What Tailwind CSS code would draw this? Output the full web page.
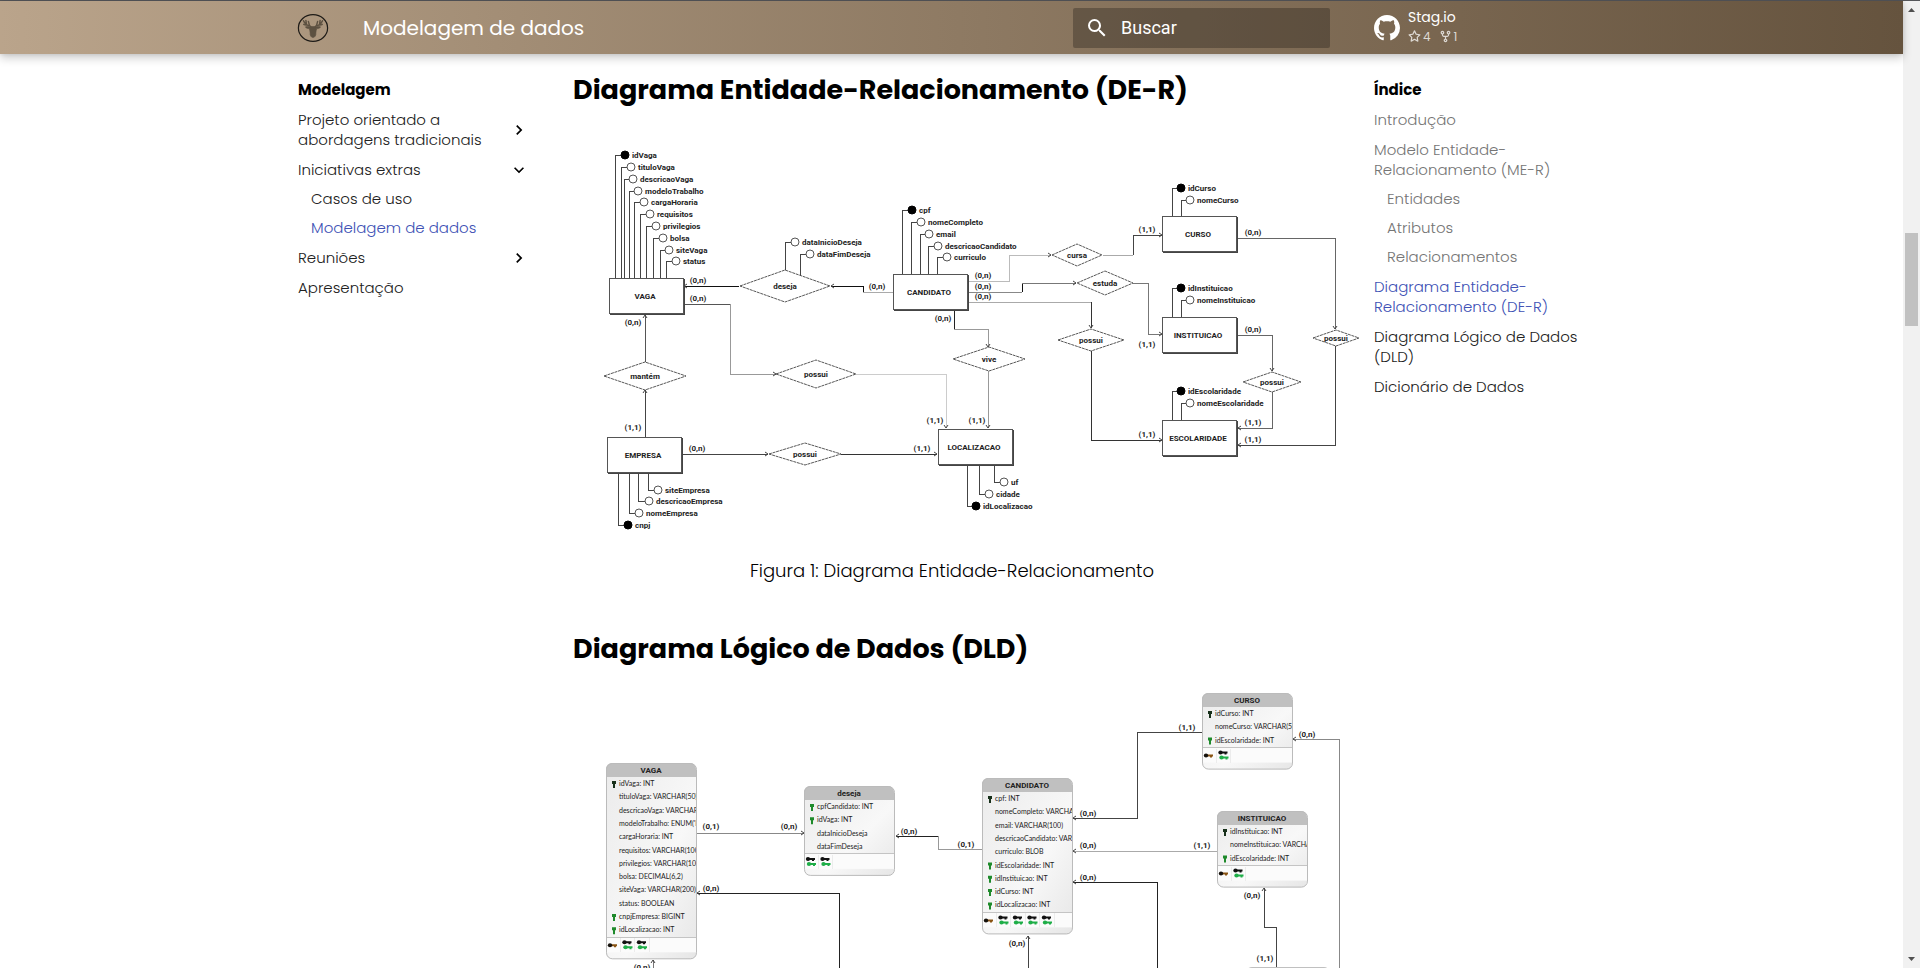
<!DOCTYPE html>
<html lang="pt-BR">
<head>
<meta charset="utf-8">
<title>Modelagem de dados</title>
<script src="https://cdn.jsdelivr.net/npm/@tailwindcss/browser@4"></script>
</head>
<body class="h-screen overflow-hidden bg-white font-['Poppins','Inter',sans-serif] text-black">
<div class="flex h-full flex-col border-t border-[#55565a]">
<div class="flex min-h-0 flex-1">

<div class="flex min-w-0 flex-1 flex-col">
  <header class="z-10 shrink-0 bg-linear-to-r from-[#baa48b] to-[#65533e] text-white shadow-[0_0_4px_rgba(0,0,0,0.1),0_4px_9px_rgba(0,0,0,0.2)]">
    <div class="mx-auto flex h-[53px] max-w-[1343px] items-center">
      <a href="#" aria-label="Início" class="ml-[17px] block">
        <svg class="size-8" viewBox="0 0 32 32" fill="none">
          <ellipse cx="16" cy="16" rx="14.600" ry="13.400" stroke="#1e1b17" stroke-width="1.2"/>
          <g fill="#5d5141" stroke="#5d5141" stroke-linejoin="round">
            <path stroke-width="0.6" d="M16 14.500c-1.500 0-2.500.3-3.200.2-1.800 0-3.300-.3-4.500.2.8 1.200 2.300 1.700 3.900 1.700.5 1.500.9 2.800.9 4.200-.2 2.700.9 4.700 2.900 4.700s3.100-2 2.900-4.700c0-1.400.4-2.700.9-4.200 1.600 0 3.100-.5 3.900-1.700-1.200-.5-2.700-.2-4.500-.2-.7.100-1.700-.2-3.200-.2z"/>
            <path fill="none" stroke-width="1.5" stroke-linecap="round" d="M14 15c-1.500-1.200-2.200-2.300-2.600-5.500M13 14c-2.500-.5-5-1.700-6.500-5.200M9.500 12.500 8.900 8.500M10 13c-1.500.2-2.400 0-3.200-.6M18 15c1.500-1.200 2.200-2.300 2.600-5.500M19 14c2.500-.5 5-1.700 6.500-5.200M22.500 12.500l.6-4M22 13c1.500.2 2.400 0 3.200-.6"/>
          </g>
        </svg>
      </a>
      <span class="ml-[34px] text-[20px]">Modelagem de dados</span>
      <form class="ml-auto flex h-10 w-[257px] items-center gap-3 rounded-xs bg-black/26 px-3">
        <svg class="size-6 shrink-0 fill-white" viewBox="0 0 24 24"><path d="M9.500 3A6.500 6.500 0 0 1 16 9.500c0 1.610-.590 3.090-1.560 4.230l.270.270h.790l5 5-1.500 1.500-5-5v-.790l-.270-.270A6.516 6.516 0 0 1 9.500 16 6.500 6.500 0 0 1 3 9.500 6.500 6.500 0 0 1 9.500 3m0 2C7 5 5 7 5 9.500S7 14 9.500 14 14 12 14 9.500 12 5 9.500 5Z"/></svg>
        <input type="search" aria-label="Buscar" placeholder="Buscar" class="min-w-0 flex-1 bg-transparent font-['Roboto',sans-serif] text-[18px] text-white outline-none placeholder:text-white">
      </form>
      <a href="#" class="ml-11 flex w-[249px] items-center gap-2">
        <svg class="size-[26px] shrink-0 fill-white" viewBox="0 0 16 16"><path d="M8 0C3.580 0 0 3.580 0 8c0 3.540 2.290 6.530 5.470 7.590.4.070.550-.170.550-.380 0-.190-.010-.820-.010-1.490-2.010.370-2.530-.490-2.690-.940-.090-.230-.480-.940-.820-1.130-.280-.150-.680-.520-.010-.530.630-.010 1.080.580 1.230.820.720 1.210 1.870.870 2.330.660.070-.520.280-.870.510-1.070-1.780-.2-3.640-.890-3.640-3.950 0-.870.310-1.590.820-2.150-.080-.2-.360-1.020.080-2.120 0 0 .670-.210 2.200.820.640-.180 1.320-.270 2-.270s1.360.090 2 .270c1.530-1.040 2.200-.820 2.200-.820.440 1.100.160 1.920.080 2.120.510.560.820 1.270.820 2.150 0 3.070-1.870 3.750-3.650 3.950.290.250.540.730.540 1.480 0 1.070-.010 1.930-.010 2.200 0 .210.150.460.550.380A8.010 8.010 0 0 0 16 8c0-4.420-3.580-8-8-8z"/></svg>
        <span class="flex flex-col gap-0.5 pb-1">
          <span class="text-[14px] leading-5">Stag.io</span>
          <span class="flex items-center text-[12px] leading-4 text-white/75">
            <svg class="size-[13px] fill-current" viewBox="0 0 16 16"><path d="M8 .25a.75.75 0 0 1 .673.418l1.882 3.815 4.210.612a.75.75 0 0 1 .416 1.279l-3.046 2.970.719 4.192a.751.751 0 0 1-1.088.791L8 12.347l-3.766 1.980a.75.75 0 0 1-1.088-.790l.720-4.194L.818 6.374a.75.75 0 0 1 .416-1.280l4.210-.611L7.327.668A.75.75 0 0 1 8 .25Zm0 2.445L6.615 5.500a.75.75 0 0 1-.564.410l-3.097.450 2.240 2.184a.75.75 0 0 1 .216.664l-.528 3.084 2.769-1.456a.75.75 0 0 1 .698 0l2.770 1.456-.530-3.084a.75.75 0 0 1 .216-.664l2.240-2.183-3.096-.450a.75.75 0 0 1-.564-.410L8 2.694Z"/></svg>
            <span class="ml-0.5">4</span>
            <svg class="ml-2 size-[13px] fill-current" viewBox="0 0 16 16"><path d="M5 5.372v.878c0 .414.336.75.75.75h4.500a.75.75 0 0 0 .75-.75v-.878a2.250 2.250 0 1 1 1.500 0v.878a2.250 2.250 0 0 1-2.250 2.250h-1.500v2.128a2.251 2.251 0 1 1-1.500 0V8.500h-1.500A2.250 2.250 0 0 1 3.500 6.250v-.878a2.250 2.250 0 1 1 1.500 0ZM5 3.250a.75.75 0 1 0-1.500 0 .75.75 0 0 0 1.500 0Zm6.750.75a.75.75 0 1 0 0-1.500.75.75 0 0 0 0 1.500Zm-3 8.750a.75.75 0 1 0-1.500 0 .75.75 0 0 0 1.500 0Z"/></svg>
            <span class="ml-0.5">1</span>
          </span>
        </span>
      </a>
    </div>
  </header>

  <div class="mx-auto flex min-h-0 w-full max-w-[1343px] flex-1">
    <nav aria-label="Modelagem" class="w-[267px] shrink-0 pt-[26px] pr-[18px] pl-[18px] text-[15px] leading-5 text-[#212121]">
      <p class="font-bold text-black">Modelagem</p>
      <ul class="mt-2.5 flex flex-col gap-2.5 font-light">
        <li><a href="#" class="flex items-center justify-between"><span class="w-[200px]">Projeto orientado a abordagens tradicionais</span><svg class="size-5 shrink-0" viewBox="0 0 24 24"><path d="M8.590 16.580 13.170 12 8.590 7.410 10 6l6 6-6 6-1.410-1.420Z"/></svg></a></li>
        <li>
          <a href="#" class="flex items-center justify-between">Iniciativas extras<svg class="size-5 shrink-0 rotate-90" viewBox="0 0 24 24"><path d="M8.590 16.580 13.170 12 8.590 7.410 10 6l6 6-6 6-1.410-1.420Z"/></svg></a>
          <ul class="mt-[9px] flex flex-col gap-[9px] pl-[13px]">
            <li><a href="#">Casos de uso</a></li>
            <li><a href="#" class="text-[#4051b5]">Modelagem de dados</a></li>
          </ul>
        </li>
        <li><a href="#" class="flex items-center justify-between">Reuniões<svg class="size-5 shrink-0" viewBox="0 0 24 24"><path d="M8.590 16.580 13.170 12 8.590 7.410 10 6l6 6-6 6-1.410-1.420Z"/></svg></a></li>
        <li><a href="#">Apresentação</a></li>
      </ul>
    </nav>

    <main class="min-w-0 flex-1 px-[26px] pt-4">
      <h2 class="text-[27px] leading-10 font-bold whitespace-nowrap">Diagrama Entidade-Relacionamento (DE-R)</h2>
      <svg id="der" role="img" aria-label="Diagrama Entidade-Relacionamento" class="mt-5 block w-full overflow-visible font-['Roboto',sans-serif]" viewBox="573 130 758 420"></svg>
      <p class="mt-[9px] text-center text-[18px] leading-6 font-light">Figura 1: Diagrama Entidade-Relacionamento</p>
      <h2 class="mt-[46px] text-[27px] leading-10 font-bold whitespace-nowrap">Diagrama Lógico de Dados (DLD)</h2>
      <svg id="dld" role="img" aria-label="Diagrama Lógico de Dados" class="mt-[11px] block w-full overflow-visible font-['Roboto',sans-serif]" viewBox="573 680 758 480"></svg>
    </main>

    <nav aria-label="Índice" class="w-[266px] shrink-0 pt-[26px] pr-4 pl-[17px] text-[15px] leading-5 text-[#212121]">
      <p class="font-bold text-black">Índice</p>
      <ul class="mt-2.5 flex flex-col gap-2.5 font-light">
        <li><a href="#" class="text-[#757575]">Introdução</a></li>
        <li><a href="#" class="text-[#757575]">Modelo Entidade-<br>Relacionamento (ME-R)</a>
          <ul class="mt-[9px] flex flex-col gap-[9px] pl-[13px] text-[#757575]">
            <li><a href="#">Entidades</a></li>
            <li><a href="#">Atributos</a></li>
            <li><a href="#">Relacionamentos</a></li>
          </ul>
        </li>
        <li><a href="#" class="text-[#4051b5]">Diagrama Entidade-<br>Relacionamento (DE-R)</a></li>
        <li><a href="#">Diagrama Lógico de Dados<br>(DLD)</a></li>
        <li><a href="#">Dicionário de Dados</a></li>
      </ul>
    </nav>
  </div>
</div>

<div aria-hidden="true" class="flex w-[17px] shrink-0 flex-col items-center bg-[#f1f1f1] pt-[7px] pb-[7px]">
  <svg class="h-1 w-[7px]" viewBox="0 0 7 4"><path d="M0 4 3.500 0 7 4Z" fill="#505050"/></svg>
  <div class="mt-[221px] h-[93px] w-[13px] bg-[#c1c1c1]"></div>
  <svg class="mt-auto h-1 w-[7px]" viewBox="0 0 7 4"><path d="M0 0 3.500 4 7 0Z" fill="#505050"/></svg>
</div>
</div>
</div>

<script>
const NS = 'http://www.w3.org/2000/svg';
function add(parent, tag, attrs, text) {
  const el = document.createElementNS(NS, tag);
  for (const k in attrs) el.setAttribute(k, attrs[k]);
  if (text) el.textContent = text;
  parent.appendChild(el);
  return el;
}
const label = (g, x, y, t, anchor = 'middle', size = 8, weight = 'bold') =>
  add(g, 'text', { x, y: y + 3, 'text-anchor': anchor, 'font-size': size, 'font-weight': weight, fill: '#222' }, t);
const line = (g, pts, color = '#555', width = 1) =>
  add(g, 'polyline', { points: pts, fill: 'none', stroke: color, 'stroke-width': width, 'shape-rendering': 'crispEdges' });
// Open arrowhead whose tip is at x, y
const heads = { r: 'M-3-2 0 0-3 2', l: 'M3-2 0 0 3 2', d: 'M-2-3 0 0 2-3', u: 'M-2 3 0 0 2 3' };
const head = (g, x, y, dir) =>
  add(g, 'path', { d: heads[dir], transform: `translate(${x} ${y})`, fill: 'none', stroke: '#444' });

const der = document.getElementById('der');
[
  ['739,286 684,286', '#111', 'l'], ['863,292 863,286 831,286', '#111', 'l'], ['893,292 863,292', '#aaa'],
  ['683,304 730,304', '#555'], ['730,304 730,374 776,374', '#999', 'r'],
  ['856,374 946,374 946,428', '#ccc', 'd'], ['645,362 645,315', '#555', 'u'], ['645,437 645,390', '#444', 'u'],
  ['682,454 768,454', '#444', 'r'], ['841,454 937,454', '#333', 'r'],
  ['954,310 954,329', '#222'], ['954,329 988,329 988,347', '#999', 'd'], ['988,371 988,428', '#999', 'd'],
  ['968,281 1009,281 1009,255 1051,255', '#bbb', 'r'], ['1103,255 1133,255', '#aaa'], ['1133,255 1133,235 1162,235', '#444', 'r'],
  ['968,292 1022,292', '#888'], ['1022,292 1022,283', '#111'], ['1022,283 1076,283', '#777', 'r'],
  ['1133,283 1148,283 1148,334 1162,334', '#777', 'r'],
  ['968,302 1091,302', '#aaa'], ['1091,302 1091,328', '#333', 'd'], ['1091,351 1091,440 1162,440', '#333', 'r'],
  ['1237,238 1335,238 1335,329', '#666', 'd'], ['1335,346 1335,445 1238,445', '#444', 'l'],
  ['1237,335 1272,335 1272,371', '#666', 'd'], ['1272,392 1272,428 1238,428', '#666', 'l'],
].forEach(([pts, color, dir]) => {
  line(der, pts, color);
  if (dir) head(der, ...pts.split(' ').pop().split(','), dir);
});

// Attributes: stem x, stem start y, circle x, circle y, name, key?
[
  [615,278,625,155,'idVaga',1],[621,278,631,167,'tituloVaga'],[624,278,633,179,'descricaoVaga'],[629,278,638,191,'modeloTrabalho'],
  [634,278,644,202,'cargaHoraria'],[640,278,650,214,'requisitos'],[646,278,656,226,'privilegios'],[653,278,663,238,'bolsa'],
  [660,278,669,250,'siteVaga'],[666,278,676,261,'status'],
  [785,271,795,242,'dataInicioDeseja'],[800,276,810,254,'dataFimDeseja'],
  [902,275,912,210,'cpf',1],[911,275,921,222,'nomeCompleto'],[920,275,929,234,'email'],[928,275,938,246,'descricaoCandidato'],[937,275,947,257,'curriculo'],
  [1172,217,1181,188,'idCurso',1],[1181,217,1190,200,'nomeCurso'],
  [1172,318,1181,288,'idInstituicao',1],[1181,318,1190,300,'nomeInstituicao'],
  [1172,421,1181,391,'idEscolaridade',1],[1181,421,1190,403,'nomeEscolaridade'],
  [994,465,1004,482,'uf'],[979,465,989,494,'cidade'],[967,465,976,506,'idLocalizacao',1],
  [648,472,658,490,'siteEmpresa'],[638,472,649,501,'descricaoEmpresa'],[629,472,639,513,'nomeEmpresa'],[618,472,628,525,'cnpj',1],
].forEach(([sx, sy, cx, cy, name, key]) => {
  line(der, `${sx},${sy} ${sx},${cy} ${cx - 4},${cy}`, '#444');
  add(der, 'circle', { cx, cy, r: 4, fill: key ? '#000' : '#fff', stroke: key ? '#000' : '#555' });
  label(der, cx + 7, cy, name, 'start');
});

[
  [609,278,'VAGA'],[607,437,'EMPRESA'],[893,274,'CANDIDATO'],[938,429,'LOCALIZACAO'],
  [1162,216,'CURSO'],[1162,317,'INSTITUICAO'],[1162,420,'ESCOLARIDADE'],
].forEach(([x, y, name]) => {
  add(der, 'rect', { x: x + 1, y: y + 1, width: 75, height: 36, fill: '#444' });
  add(der, 'rect', { x: x + 0.5, y: y + 0.5, width: 74, height: 35, fill: '#fff', stroke: '#555' });
  label(der, x + 36, y + 18, name);
});

[
  [785,286,45,16,'deseja'],[645,376,41,14,'mantém'],[816,374,40,14,'possui'],[805,454,36,11,'possui'],[989,359,36,12,'vive'],
  [1091,340,33,11,'possui'],[1077,255,25,11,'cursa'],[1105,283,28,12,'estuda'],[1272,382,29,10,'possui'],[1336,338,23,8,'possui'],
].forEach(([x, y, w, h, name]) => {
  add(der, 'path', { d: `M${x - w} ${y}L${x} ${y - h}L${x + w} ${y}L${x} ${y + h}Z`, fill: '#fff', stroke: '#444', 'stroke-width': 0.9, 'stroke-dasharray': '3 0.7' });
  label(der, x, y, name);
});

[
  [698,280,0],[698,298,0],[633,322,0],[633,427,1],[697,448,0],[877,286,0],[922,448,1],[935,420,1],[977,420,1],[943,318,0],
  [983,275,0],[983,286,0],[983,296,0],[1147,229,1],[1253,232,0],[1147,344,1],[1253,329,0],[1147,434,1],[1253,422,1],[1253,439,1],
].forEach(([x, y, one]) => label(der, x, y, one ? '(1,1)' : '(0,n)'));

const dld = document.getElementById('dld');
const grad = add(dld, 'linearGradient', { id: 'body', x1: 0, y1: 0, x2: 1, y2: 1 });
add(grad, 'stop', { offset: 0, 'stop-color': '#ebebeb' });
add(grad, 'stop', { offset: 0.6, 'stop-color': '#f8f8f8' });
add(grad, 'stop', { offset: 1, 'stop-color': '#e6e6e6' });
[
  ['696,833 804,833', '#888', 'r'], ['938,836 896,836', '#222', 'l'], ['938,836 938,849 982,849', '#999'],
  ['839,975 839,893 697,893', '#222', 'l'], ['653,975 653,960', '#777', 'u'],
  ['1202,732 1137,732 1137,818 1073,818', '#444', 'l'], ['1217,851 1073,851', '#aaa', 'l'],
  ['1157,975 1157,882 1073,882', '#222', 'l'], ['1028,975 1028,936', '#444', 'u'],
  ['1339,975 1339,739 1293,739', '#888', 'l'], ['1276,968 1276,927 1264,927 1264,888', '#444', 'u'],
].forEach(([pts, color, dir]) => {
  line(dld, pts, color);
  if (dir) head(dld, ...pts.split(' ').pop().split(','), dir);
});

const keyDown = (g, x, y, color) =>
  add(g, 'path', { d: `M${x - 2} ${y - 3}h4v3h-1v4h-2v-4h-1z`, fill: color });
const keySide = (g, x, y, bow, blade) => {
  add(g, 'path', { d: `M${x + 3} ${y - 1}h6v2h-1v1h-2v-1h-3z`, fill: blade });
  add(g, 'ellipse', { cx: x + 2, cy: y, rx: 2.200, ry: 2, fill: bow });
};

// Field prefix: "*" primary key, "+" foreign key
[
  [606,763,'VAGA',3,['*idVaga: INT','tituloVaga: VARCHAR(50)','descricaoVaga: VARCHAR','modeloTrabalho: ENUM(\'P','cargaHoraria: INT','requisitos: VARCHAR(100','privilegios: VARCHAR(100','bolsa: DECIMAL(6,2)','siteVaga: VARCHAR(200)','status: BOOLEAN','+cnpjEmpresa: BIGINT','+idLocalizacao: INT']],
  [804,786,'deseja',2,['+cpfCandidato: INT','+idVaga: INT','dataInicioDeseja','dataFimDeseja']],
  [982,778,'CANDIDATO',5,['*cpf: INT','nomeCompleto: VARCHAR','email: VARCHAR(100)','descricaoCandidato: VAR','curriculo: BLOB','+idEscolaridade: INT','+idInstituicao: INT','+idCurso: INT','+idLocalizacao: INT']],
  [1202,693,'CURSO',2,['*idCurso: INT','nomeCurso: VARCHAR(50','+idEscolaridade: INT']],
  [1217,811,'INSTITUICAO',2,['*idInstituicao: INT','nomeInstituicao: VARCHA','+idEscolaridade: INT']],
].forEach(([x, y, name, indexes, fields], i) => {
  const w = 90, sep = y + 21 + (fields.length - 1) * 13.300 + 7, h = sep + 22 - y;
  const clip = add(dld, 'clipPath', { id: 'clip' + i });
  add(clip, 'rect', { x, y, width: w, height: h, rx: 6 });
  const g = add(dld, 'g', { 'clip-path': `url(#clip${i})` });
  add(g, 'rect', { x, y, width: w, height: h, fill: 'url(#body)' });
  add(g, 'rect', { x, y, width: w, height: 14, fill: '#c0c0c0' });
  add(g, 'rect', { x, y: sep, width: w, height: 15, fill: '#fbfbfb' });
  line(g, `${x},${sep} ${x + w},${sep}`, '#c4c4c4');
  label(g, x + w / 2, y + 7, name);
  fields.forEach((f, r) => {
    const cy = y + 21 + r * 13.300;
    if (f[0] === '*') keyDown(g, x + 8, cy, '#17301a');
    if (f[0] === '+') keyDown(g, x + 8, cy, '#1e8a2b');
    add(g, 'text', { x: x + 13, y: cy + 2, 'font-size': 7, 'font-family': 'Lato, sans-serif', fill: '#222' }, f.replace(/^[*+]/, ''));
  });
  for (let k = 0; k < indexes; k++) {
    const kx = x + 2 + k * 14.500;
    if (k === 0 && name !== 'deseja') keySide(g, kx, sep + 8, '#15110c', '#8a5514');
    else { keySide(g, kx, sep + 5, '#111', '#111'); keySide(g, kx + 1, sep + 10, '#1fae48', '#1fae48'); }
    line(g, `${kx + 12},${sep + 1} ${kx + 12},${sep + 15}`, '#ececec');
  }
  add(dld, 'rect', { x: x + 0.5, y: y + 0.5, width: w, height: h - 1, rx: 6, fill: 'none', stroke: '#bbb' });
});
add(dld, 'rect', { x: 1246, y: 967, width: 84, height: 60, rx: 6, fill: '#c0c0c0' });

[
  [711,826,'(0,1)'],[789,826,'(0,n)'],[909,831,'(0,n)'],[966,844,'(0,1)'],[711,888,'(0,n)'],[642,967,'(0,n)'],
  [1088,813,'(0,n)'],[1187,727,'(1,1)'],[1088,845,'(0,n)'],[1202,845,'(1,1)'],[1088,877,'(0,n)'],[1017,943,'(0,n)'],
  [1307,734,'(0,n)'],[1252,895,'(0,n)'],[1265,958,'(1,1)'],
].forEach(([x, y, t]) => label(dld, x, y, t));
</script>
</body>
</html>
